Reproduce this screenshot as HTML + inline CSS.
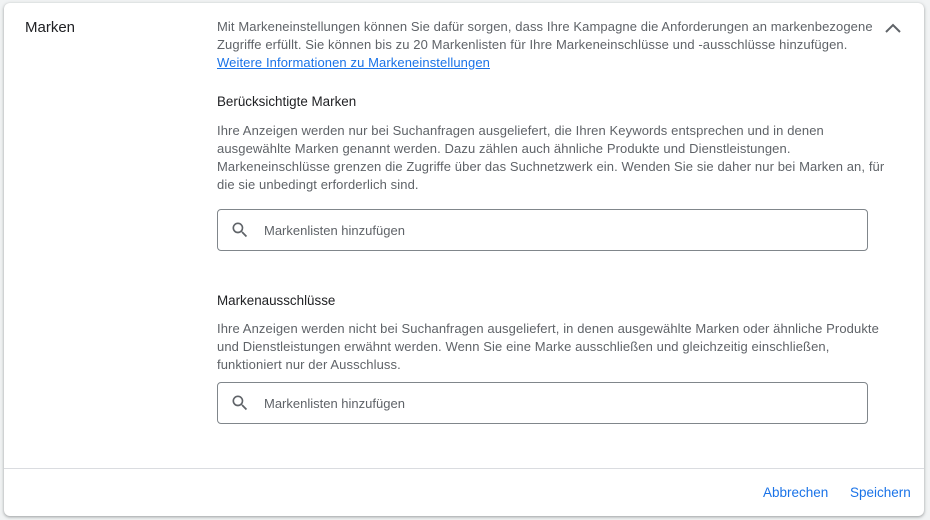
<!DOCTYPE html>
<html><head><meta charset="utf-8"><style>
body{margin:0;width:930px;height:520px;background:#f1f3f4;font-family:"Liberation Sans",Arial,sans-serif;position:relative;overflow:hidden}
.card{position:absolute;left:4px;top:3px;width:920px;height:513px;background:#fff;border-radius:6px;box-shadow:0 1px 2px rgba(60,64,67,.3),0 1px 3px 1px rgba(60,64,67,.15)}
.a{position:absolute;white-space:nowrap}
.t{font-size:13px;letter-spacing:0.1px;color:#5f6368;line-height:18px}
.h{font-size:13.4px;color:#202124}
.box{position:absolute;left:213px;width:649px;height:40px;border:1px solid #80868b;border-radius:4px}
.box span{position:absolute;left:46px;top:13px;font-size:13px;color:#5f6368}
.box svg{position:absolute;left:12px;top:10px}
.btn{font-size:13.5px;color:#1a73e8}
</style></head><body>
<div class="card">
<div class="a" style="left:21px;top:16px;font-size:15px;color:#202124">Marken</div>
<div class="a t" style="left:213px;top:15px">Mit Markeneinstellungen können Sie dafür sorgen, dass Ihre Kampagne die Anforderungen an markenbezogene<br>Zugriffe erfüllt. Sie können bis zu 20 Markenlisten für Ihre Markeneinschlüsse und -ausschlüsse hinzufügen.<br><span style="color:#1a73e8;text-decoration:underline">Weitere Informationen zu Markeneinstellungen</span></div>
<svg class="a" style="left:880px;top:18px" width="18" height="14" viewBox="0 0 18 14"><path d="M2 11L9 4l7 7" fill="none" stroke="#5f6368" stroke-width="2"/></svg>
<div class="a h" style="left:213px;top:91px">Berücksichtigte Marken</div>
<div class="a t" style="left:213px;top:119px">Ihre Anzeigen werden nur bei Suchanfragen ausgeliefert, die Ihren Keywords entsprechen und in denen<br>ausgewählte Marken genannt werden. Dazu zählen auch ähnliche Produkte und Dienstleistungen.<br>Markeneinschlüsse grenzen die Zugriffe über das Suchnetzwerk ein. Wenden Sie sie daher nur bei Marken an, für<br>die sie unbedingt erforderlich sind.</div>
<div class="box" style="top:206px"><svg width="20" height="20" viewBox="0 0 24 24"><path fill="#5f6368" d="M15.5 14h-.79l-.28-.27A6.47 6.47 0 0016 9.5 6.5 6.5 0 109.5 16c1.61 0 3.09-.59 4.23-1.57l.27.28v.79l5 4.99L20.490 19l-4.99-5zm-6 0C7.01 14 5 11.99 5 9.5S7.01 5 9.5 5 14 7.01 14 9.5 11.99 14 9.5 14z"/></svg><span>Markenlisten hinzufügen</span></div>
<div class="a h" style="left:213px;top:290px">Markenausschlüsse</div>
<div class="a t" style="left:213px;top:317px">Ihre Anzeigen werden nicht bei Suchanfragen ausgeliefert, in denen ausgewählte Marken oder ähnliche Produkte<br>und Dienstleistungen erwähnt werden. Wenn Sie eine Marke ausschließen und gleichzeitig einschließen,<br>funktioniert nur der Ausschluss.</div>
<div class="box" style="top:379px"><svg width="20" height="20" viewBox="0 0 24 24"><path fill="#5f6368" d="M15.5 14h-.79l-.28-.27A6.470 6.47 0 0016 9.5 6.5 6.5 0 109.5 16c1.61 0 3.09-.59 4.23-1.57l.27.28v.79l5 4.99L20.49 19l-4.99-5zm-6 0C7.01 14 5 11.99 5 9.5S7.01 5 9.5 5 14 7.01 14 9.5 11.99 14 9.5 14z"/></svg><span>Markenlisten hinzufügen</span></div>
<div class="a" style="left:0;top:465px;width:920px;height:1px;background:#dadce0"></div>
<div class="a btn" style="left:759px;top:482px">Abbrechen</div>
<div class="a btn" style="left:846px;top:482px">Speichern</div>
</div>
</body></html>
